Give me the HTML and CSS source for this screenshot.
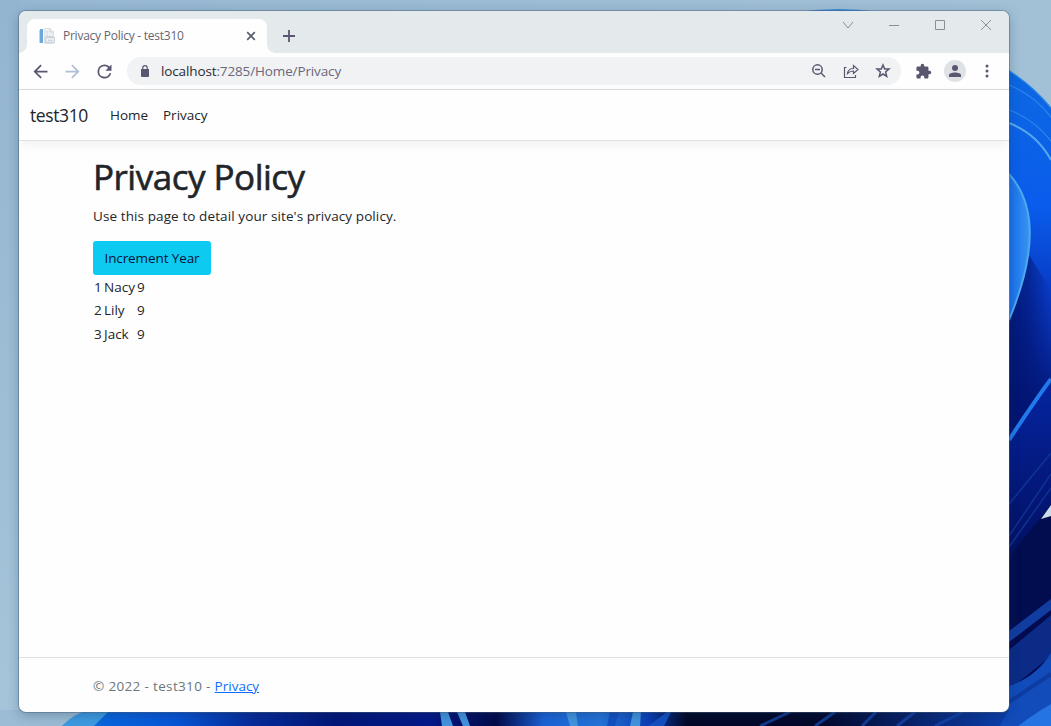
FILE: index.html
```
<!DOCTYPE html>
<html lang="en">
<head>
<meta charset="utf-8">
<title>Privacy Policy - test310</title>
<link rel="stylesheet" href="styles.css">
</head>
<body>
<svg class="wallpaper" viewBox="0 0 1051 726" aria-hidden="true">
  <defs>
    <linearGradient id="sky" x1="0" y1="0" x2="1" y2="0"><stop offset="0" stop-color="#96b7d2"/><stop offset="1" stop-color="#a2c1d7"/></linearGradient>
    <linearGradient id="skyLeft" x1="0" y1="0" x2="0" y2="1"><stop offset="0" stop-color="#94b5d0"/><stop offset="1" stop-color="#a6c5da"/></linearGradient>
    <linearGradient id="petal" x1="1051" y1="100" x2="1000" y2="400" gradientUnits="userSpaceOnUse"><stop offset="0" stop-color="#0c66e4"/><stop offset=".35" stop-color="#0a5cec"/><stop offset=".65" stop-color="#0838c0"/><stop offset="1" stop-color="#021678"/></linearGradient>
    <linearGradient id="inner" x1="1009" y1="0" x2="1031" y2="0" gradientUnits="userSpaceOnUse"><stop offset="0" stop-color="#166ff0"/><stop offset="1" stop-color="#3c96ee"/></linearGradient>
    <linearGradient id="deep" x1="0" y1="400" x2="0" y2="600" gradientUnits="userSpaceOnUse"><stop offset="0" stop-color="#04229a"/><stop offset="1" stop-color="#020b50"/></linearGradient>
    <linearGradient id="shade" x1="1009" y1="0" x2="1051" y2="0" gradientUnits="userSpaceOnUse"><stop offset="0" stop-color="#021470" stop-opacity=".85"/><stop offset=".45" stop-color="#021470" stop-opacity=".6"/><stop offset="1" stop-color="#021470" stop-opacity="0"/></linearGradient>
    <linearGradient id="floor" x1="60" y1="0" x2="1009" y2="0" gradientUnits="userSpaceOnUse">
      <stop offset="0" stop-color="#3090e0"/><stop offset=".045" stop-color="#0765dc"/><stop offset=".12" stop-color="#0756d8"/><stop offset=".2" stop-color="#062c9c"/><stop offset=".29" stop-color="#021678"/><stop offset=".39" stop-color="#03188a"/><stop offset=".46" stop-color="#020a48"/><stop offset=".51" stop-color="#1a62d8"/><stop offset=".57" stop-color="#2374d8"/><stop offset=".62" stop-color="#0a3fb8"/><stop offset=".66" stop-color="#020828"/><stop offset=".8" stop-color="#02082c"/><stop offset="1" stop-color="#0c3fae"/>
    </linearGradient>
  </defs>
  <rect width="1051" height="726" fill="url(#sky)"/>
  <rect width="20" height="726" fill="url(#skyLeft)"/>
  <rect y="710" width="110" height="16" fill="#9bbcd4"/>
  <path d="M797 12Q840 6 878 12Z" fill="#398ddc"/>
  <path d="M1000 64Q1030 83 1051 108V726H1000Z" fill="url(#petal)"/>
  <g fill="none" stroke="#3c94f0" stroke-width="1.3">
    <path d="M1009 71Q1032 85 1051 108" stroke="#2688e4"/>
    <path d="M1009 85Q1034 95 1051 117" stroke-opacity=".7"/>
    <path d="M1009 110Q1034 119 1051 141" stroke-opacity=".7"/>
    <path d="M1009 123Q1037 134 1051 160" stroke="#55a8ee" stroke-width="2"/>
  </g>
  <path d="M1009 320Q1024 285 1029 255L1051 290V400L1009 440Z" fill="url(#shade)"/>
  <path d="M1009 174C1037 205 1036 255 1009 320Z" fill="url(#inner)" stroke="#4caaf0" stroke-width="2"/>
  <path d="M1009 440Q1034 402 1051 379V726H1009Z" fill="url(#deep)"/>
  <path d="M1009 440Q1034 402 1051 379" fill="none" stroke="#217aec" stroke-width="4"/>
  <path d="M1009 504L1051 453M1009 536L1051 474M1009 547L1051 488" stroke="#123fa5" stroke-width="1.5" stroke-opacity=".7"/>
  <path d="M1009 557L1051 505V604L1009 642Z" fill="#020d4f"/>
  <path d="M1041 519L1051 505V516Z" fill="#cbdcec"/>
  <path d="M1009 631L1051 599V610L1009 642Z" fill="#103d9f"/>
  <path d="M1009 650L1051 615V656L1009 690Z" fill="#0b2b86"/>
  <path d="M1009 686Q1036 677 1051 653V726H1000V712Z" fill="#124cba"/>
  <path d="M1009 702L1051 674" stroke="#0d3ba0" stroke-width="4"/>
  <path d="M62 726Q75 713 90 710H1009L1000 726Z" fill="url(#floor)"/>
  <path d="M62 726Q75 713 90 710H110L94 726Z" fill="#3e9ae1"/>
  <path d="M440 712H448L453 726H442ZM457 712H465L470 726H463ZM566 712H576L578 726H570ZM633 712H641L640 726H630Z" fill="#4294df"/>
  <path d="M610 712H619L615 726H607ZM667 712H671L664 726H648Z" fill="#1350c2"/>
  <path d="M760 726L790 712M815 726L835 712M862 726L876 712M897 726L915 712M935 726L963 712" stroke="#1445aa" stroke-width="3" stroke-opacity=".8"/>
  <path d="M1018 726Q1040 710 1051 704V726Z" fill="#2474e4"/>
</svg>

<main class="window">
  <header class="titlebar">
    <div class="tab">
      <svg class="favicon" width="16" height="17" viewBox="0 0 16 17"><path d="M1 1H4V15H1Z" fill="#6ba9dc"/><path d="M0 2H1V15H0Z" fill="#b9d7ed"/><path d="M5.500.5H11L14.500 4V15.500H5.500Z" fill="#eef1f4" stroke="#dde2e6"/><path d="M11 .5V4H14.500M7 4H9M7 7H9" fill="none" stroke="#ccd4db"/><path d="M7.500 9.500V8.500H14.500V9.500M6.500 9.500H15.500V14.500H6.500ZM9 12.500H14" fill="#e8ecf0" stroke="#ccd4da"/></svg>
      <span class="tab-title">Privacy Policy - test310</span>
      <svg class="tab-close" width="10" height="10" viewBox="0 0 10 10"><path d="M1.200 1.200L8.800 8.800M8.800 1.200L1.200 8.800"/></svg>
    </div>
    <svg class="new-tab" width="12" height="12" viewBox="0 0 12 12"><path d="M6 0V12M0 6H12"/></svg>
    <div class="window-controls">
      <svg width="12" height="12" viewBox="0 0 12 12"><path d="M1 3L6 9L11 3"/></svg>
      <svg width="12" height="12" viewBox="0 0 12 12"><path d="M1 6.500H11"/></svg>
      <svg width="12" height="12" viewBox="0 0 12 12"><path d="M1.500 1.500H10.500V10.500H1.500Z"/></svg>
      <svg width="12" height="12" viewBox="0 0 12 12"><path d="M1 1L11 11M11 1L1 11"/></svg>
    </div>
  </header>

  <div class="toolbar">
    <svg class="icon" viewBox="0 0 24 24"><path d="M20 11H7.830l5.590-5.590L12 4l-8 8 8 8 1.410-1.410L7.830 13H20v-2z"/></svg>
    <svg class="icon icon-disabled" viewBox="0 0 24 24"><path d="M12 4l-1.410 1.410L16.170 11H4v2h12.170l-5.580 5.590L12 20l8-8z"/></svg>
    <svg class="icon" viewBox="0 0 24 24"><path d="M17.650 6.350A7.960 7.960 0 0 0 12 4a8 8 0 1 0 7.730 10h-2.080A6 6 0 1 1 12 6c1.660 0 3.140.690 4.220 1.780L13 11h7V4z"/></svg>
    <div class="omnibox">
      <svg class="lock" width="8" height="12" viewBox="0 0 8 12"><path d="M0 4H8V11Q8 12 7 12H1Q0 12 0 11Z" fill="#5b5670"/><path d="M1.800 5V2.800A2.200 2.200 0 0 1 6.200 2.800V5" fill="none" stroke="#5b5670" stroke-width="1.200"/></svg>
      <span class="url"><b>localhost</b>:7285/Home/Privacy</span>
      <div class="omnibox-actions">
        <svg class="line" width="16" height="16" viewBox="0 0 16 16"><circle cx="6.500" cy="6.500" r="4.700"/><path d="M4 6.500H9M10 10L14 14"/></svg>
        <svg class="line thin" width="16" height="16" viewBox="0 0 16 16"><path d="M3.500 4.500H1.500V14.500H12.500V12M4.500 10.500C5 7 7 5.500 10.500 5.500V2.500L15 6.500L10.500 10.500V8C8 8 6 9 4.500 10.500Z"/></svg>
        <svg class="line" width="16" height="16" viewBox="0 0 16 16"><path d="M8 2L9.700 6H14L10.600 8.900L11.700 13.300L8 11L4.300 13.300L5.400 8.900L2 6H6.300Z"/></svg>
      </div>
    </div>
    <svg class="icon extension" viewBox="0 0 24 24"><path d="M20.500 11H19V7c0-1.100-.9-2-2-2h-4V3.500a2.500 2.500 0 0 0-5 0V5H4c-1.100 0-2 .9-2 2v3.800h1.500a2.700 2.700 0 0 1 0 5.400H2V20c0 1.100.9 2 2 2h3.800v-1.500a2.700 2.700 0 0 1 5.400 0V22H17c1.100 0 2-.9 2-2v-4h1.500a2.500 2.500 0 0 0 0-5z"/></svg>
    <svg class="profile" width="22" height="22" viewBox="0 0 22 22"><circle cx="11" cy="11" r="11" fill="#dee2e7"/><circle cx="11" cy="8" r="3" fill="#5b5670"/><path d="M5 17V15.200C5 11.500 17 11.500 17 15.200V17Z" fill="#5b5670"/></svg>
    <svg class="menu" width="4" height="14" viewBox="0 0 4 14"><circle cx="2" cy="2" r="1.500"/><circle cx="2" cy="7" r="1.500"/><circle cx="2" cy="12" r="1.500"/></svg>
  </div>

  <nav class="navbar">
    <span class="brand">test310</span>
    <span class="nav-link nav-home">Home</span>
    <span class="nav-link nav-privacy">Privacy</span>
  </nav>

  <section class="content">
    <h1>Privacy Policy</h1>
    <p class="intro">Use this page to detail your site's privacy policy.</p>
    <button class="increment" type="button">Increment Year</button>
    <table class="people">
      <tr><td>1</td><td>Nacy</td><td>9</td></tr>
      <tr><td>2</td><td>Lily</td><td>9</td></tr>
      <tr><td>3</td><td>Jack</td><td>9</td></tr>
    </table>
  </section>

  <footer class="footer"><span class="copyright">© 2022 - test310 - <a href="#">Privacy</a></span></footer>
</main>
</body>
</html>
```
FILE: styles.css
```
* { box-sizing: border-box; }
body {
  margin: 0;
  width: 1051px;
  height: 726px;
  padding: 11px 42px 14px 19px;
  overflow: hidden;
  font: 13.500px/20px "Open Sans", "Noto Sans", sans-serif;
  color: #212529;
}
svg { display: block; flex: none; }
.wallpaper { position: absolute; top: 0; left: 0; width: 1051px; height: 726px; z-index: -1; }
.window {
  display: flex;
  flex-direction: column;
  width: 990px;
  height: 701px;
  background: #fefefe;
  border-radius: 7px;
  overflow: hidden;
  box-shadow: 0 0 0 1px rgba(70, 95, 125, .45), 0 3px 12px rgba(20, 40, 70, .3);
}
.titlebar { display: flex; flex: 0 0 42px; background: #e4e9eb; padding: 8px 0 0 8px; }
.tab {
  position: relative;
  display: flex;
  align-items: center;
  width: 240px;
  height: 34px;
  padding-left: 12px;
  background: #fefefe;
  border-radius: 8px 8px 0 0;
}
.tab::before, .tab::after {
  content: "";
  position: absolute;
  bottom: 0;
  width: 8px;
  height: 8px;
}
.tab::before { left: -8px; background: radial-gradient(circle at 0 0, transparent 7.500px, #fefefe 8px); }
.tab::after { right: -8px; background: radial-gradient(circle at 100% 0, transparent 7.500px, #fefefe 8px); }
.tab-title { width: 156px; margin-left: 8px; font-size: 12px; letter-spacing: -.25px; color: #66666f; white-space: nowrap; }
.tab-close { margin-left: 27px; fill: none; stroke: #5b6070; stroke-width: 1.800; }
.new-tab { margin: 11px 0 0 16px; stroke: #5b5670; stroke-width: 1.800; }
.window-controls { display: flex; gap: 34px; margin: 0 17px 0 auto; }
.window-controls svg { fill: none; stroke: #8c9094; stroke-width: 1; }
.toolbar { display: flex; align-items: center; flex: 0 0 37px; padding: 0 16px 0 11px; border-bottom: 1px solid #d9dadd; }
.icon { width: 21px; height: 21px; margin-right: 11px; fill: #5b5670; }
.icon-disabled { fill: #afbfd4; }
.omnibox { display: flex; align-items: center; width: 774px; height: 28px; margin-left: 1px; padding: 0 10px 0 14px; border-radius: 14px; background: #f1f2f4; }
.url { margin-left: 12px; letter-spacing: -.13px; color: #6a6779; white-space: nowrap; }
.url b { font-weight: 400; color: #2b2b36; }
.omnibox-actions { display: flex; gap: 16px; margin-left: auto; }
.line { fill: none; stroke: #5b5670; stroke-width: 1.500; }
.thin { stroke-width: 1.200; }
.extension { width: 17px; height: 17px; margin: 0 12px 0 14px; }
.profile { margin-right: 19px; }
.menu { fill: #5b5670; }
.navbar { display: flex; align-items: center; flex: 0 0 51px; padding-left: 11px; border-bottom: 1px solid #dee2e6; box-shadow: 0 4px 10px rgba(0, 0, 0, .05); white-space: nowrap; }
.brand { width: 80px; font-size: 17.500px; letter-spacing: -.4px; }
.nav-home { width: 53px; }
.content { flex: 1; padding: 15px 75px 0 74px; white-space: nowrap; }
h1 { margin: 0 0 8px; font-size: 35px; font-weight: 500; line-height: 42px; letter-spacing: -.5px; -webkit-text-stroke: .6px #212529; }
.intro { margin: 0 0 15px; letter-spacing: .1px; }
.increment { display: flex; align-items: center; justify-content: center; width: 118px; height: 34px; padding: 0; border: 0; border-radius: 3px; background: #0dcaf0; color: #071238; font: inherit; letter-spacing: -.1px; }
.people { margin-top: 1px; border-collapse: collapse; }
.people td { height: 23px; padding: 0 1px; line-height: 23px; }
.people tr:last-child td { height: 24px; padding-top: 1px; }
.people td:first-child { width: 10px; }
.people td:nth-child(2) { width: 33px; }
.footer { display: flex; align-items: center; flex: 0 0 55px; padding: 1px 74px 0; border-top: 1px solid #dee0e3; color: #6c757d; letter-spacing: .34px; }
.footer a { color: #0d6efd; letter-spacing: 0; }
```
